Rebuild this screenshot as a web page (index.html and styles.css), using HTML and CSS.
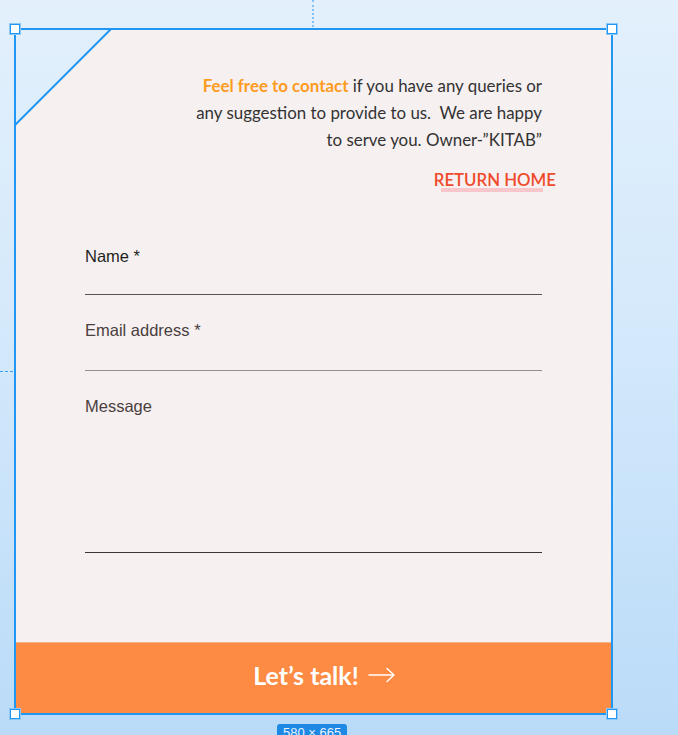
FILE: index.html
```html
<!DOCTYPE html>
<html lang="en">
<head>
<meta charset="utf-8">
<title>Contact</title>
<link rel="stylesheet" href="styles.css">
</head>
<body>
<div class="stage">
  <div class="guide-v"></div>
  <div class="guide-h"></div>
  <div class="frame">
    <div class="card">
      <p class="intro"><span class="accent">Feel free to contact</span> if you have any queries or any suggestion to provide to us.&nbsp; We are happy to serve you. Owner-”KITAB”</p>
      <div class="return-row"><a class="return" href="#">RETURN HOME</a></div>
      <form class="form">
        <label class="field">
          <span class="label label-dark">Name *</span>
          <input class="input input-dark" type="text">
        </label>
        <label class="field">
          <span class="label">Email address *</span>
          <input class="input input-light" type="email">
        </label>
        <label class="field">
          <span class="label">Message</span>
          <textarea class="input textarea"></textarea>
        </label>
      </form>
      <button class="talk" type="button">Let’s talk!<svg class="arrow" width="28" height="16" viewBox="0 0 28 16"><path d="M1 8H26M19 1.5L26 8L19 14.5" fill="none" stroke="#fff" stroke-width="1.4" stroke-linecap="round" stroke-linejoin="round"/></svg></button>
    </div>
    <svg class="diag" width="100" height="100" viewBox="0 0 100 100"><line x1="96" y1="0" x2="0" y2="96" stroke="#2196f3" stroke-width="2"/></svg>
    <span class="handle h-tl"></span>
    <span class="handle h-tr"></span>
    <span class="handle h-bl"></span>
    <span class="handle h-br"></span>
    <span class="size">580 × 665</span>
  </div>
</div>
</body>
</html>
```
FILE: styles.css
```css
html, body {
  margin: 0;
  padding: 0;
}
body {
  width: 678px;
  height: 735px;
  overflow: hidden;
  background: linear-gradient(180deg, #e3f0fc 0%, #d4e9fb 45%, #badbf8 100%);
  font-family: "Lato", "Noto Sans", sans-serif;
}
.stage {
  position: relative;
  padding: 28px 0 0 14px;
}
.guide-v {
  position: absolute;
  left: 312px;
  top: 0;
  height: 27px;
  border-left: 2px dotted #7fc1f7;
}
.guide-h {
  position: absolute;
  left: 0;
  top: 371px;
  width: 13px;
  border-top: 1px dashed #3a9ff1;
}
.frame {
  position: relative;
  width: 599px;
  height: 687px;
  box-sizing: border-box;
  border: 2px solid #2196f3;
}
.card {
  height: 100%;
  display: flex;
  flex-direction: column;
  background: #f6f0f0;
  clip-path: polygon(95px 0, 100% 0, 100% 100%, 0 100%, 0 95px);
  padding: 42px 0 0 0;
  box-sizing: border-box;
}
.intro {
  margin: 0 69px 0 auto;
  max-width: 352px;
  text-align: right;
  font-size: 16.9px;
  line-height: 27px;
  color: #333;
}
.accent {
  color: #fd9b1f;
  font-weight: 700;
}
.return-row {
  display: flex;
  justify-content: flex-end;
  margin: 17px 55px 0 0;
}
.return {
  position: relative;
  font-size: 16.8px;
  line-height: 20px;
  color: #ef4a2b;
  text-decoration: none;
  font-weight: 600;
}
.return::after {
  content: "";
  position: absolute;
  left: 7px;
  right: 13px;
  bottom: -2px;
  height: 4px;
  background: #f9c6cb;
}
.form {
  display: flex;
  flex-direction: column;
  gap: 26px;
  margin: 57px 69px 0 69px;
}
.field {
  display: flex;
  flex-direction: column;
}
.label {
  font-family: "Liberation Sans", Arial, sans-serif;
  font-size: 16.5px;
  line-height: 18px;
  color: #4a3e3e;
}
.label-dark {
  color: #1f1f1f;
}
.input {
  border: 0;
  border-bottom: 1px solid #3c3535;
  background: transparent;
  height: 30px;
  padding: 0;
  margin: 0;
  outline: none;
  font: inherit;
}
.input-dark {
  height: 29px;
  border-bottom-color: #5c5050;
}
.input-light {
  height: 31px;
  border-bottom-color: #9b8b8b;
}
.textarea {
  height: 137px;
  resize: none;
}
.talk {
  margin-top: auto;
  height: 71px;
  border: 0;
  border-top: 1px solid #f6b48c;
  background: #fe8b43;
  color: #fff;
  font-family: "Lato", "Noto Sans", sans-serif;
  font-weight: 700;
  font-size: 25px;
  display: flex;
  align-items: center;
  justify-content: center;
  gap: 9px;
  padding: 0 0 6px 22px;
}
.arrow {
  display: block;
}
.diag {
  position: absolute;
  left: -1px;
  top: -1px;
  overflow: visible;
}
.handle {
  position: absolute;
  width: 8px;
  height: 8px;
  background: #fff;
  border: 1px solid #2196f3;
  box-shadow: 0 0 0 1px #8cc8f8;
}
.h-tl { left: -6px; top: -6px; }
.h-tr { right: -6px; top: -6px; }
.h-bl { left: -6px; bottom: -6px; }
.h-br { right: -6px; bottom: -6px; }
.size {
  position: absolute;
  left: 261px;
  top: 694px;
  padding: 1px 6px 3px;
  border-radius: 3px;
  background: #1e88e5;
  color: #e8f3fd;
  font-family: "Liberation Sans", Arial, sans-serif;
  font-size: 13px;
  line-height: 16px;
}
```
